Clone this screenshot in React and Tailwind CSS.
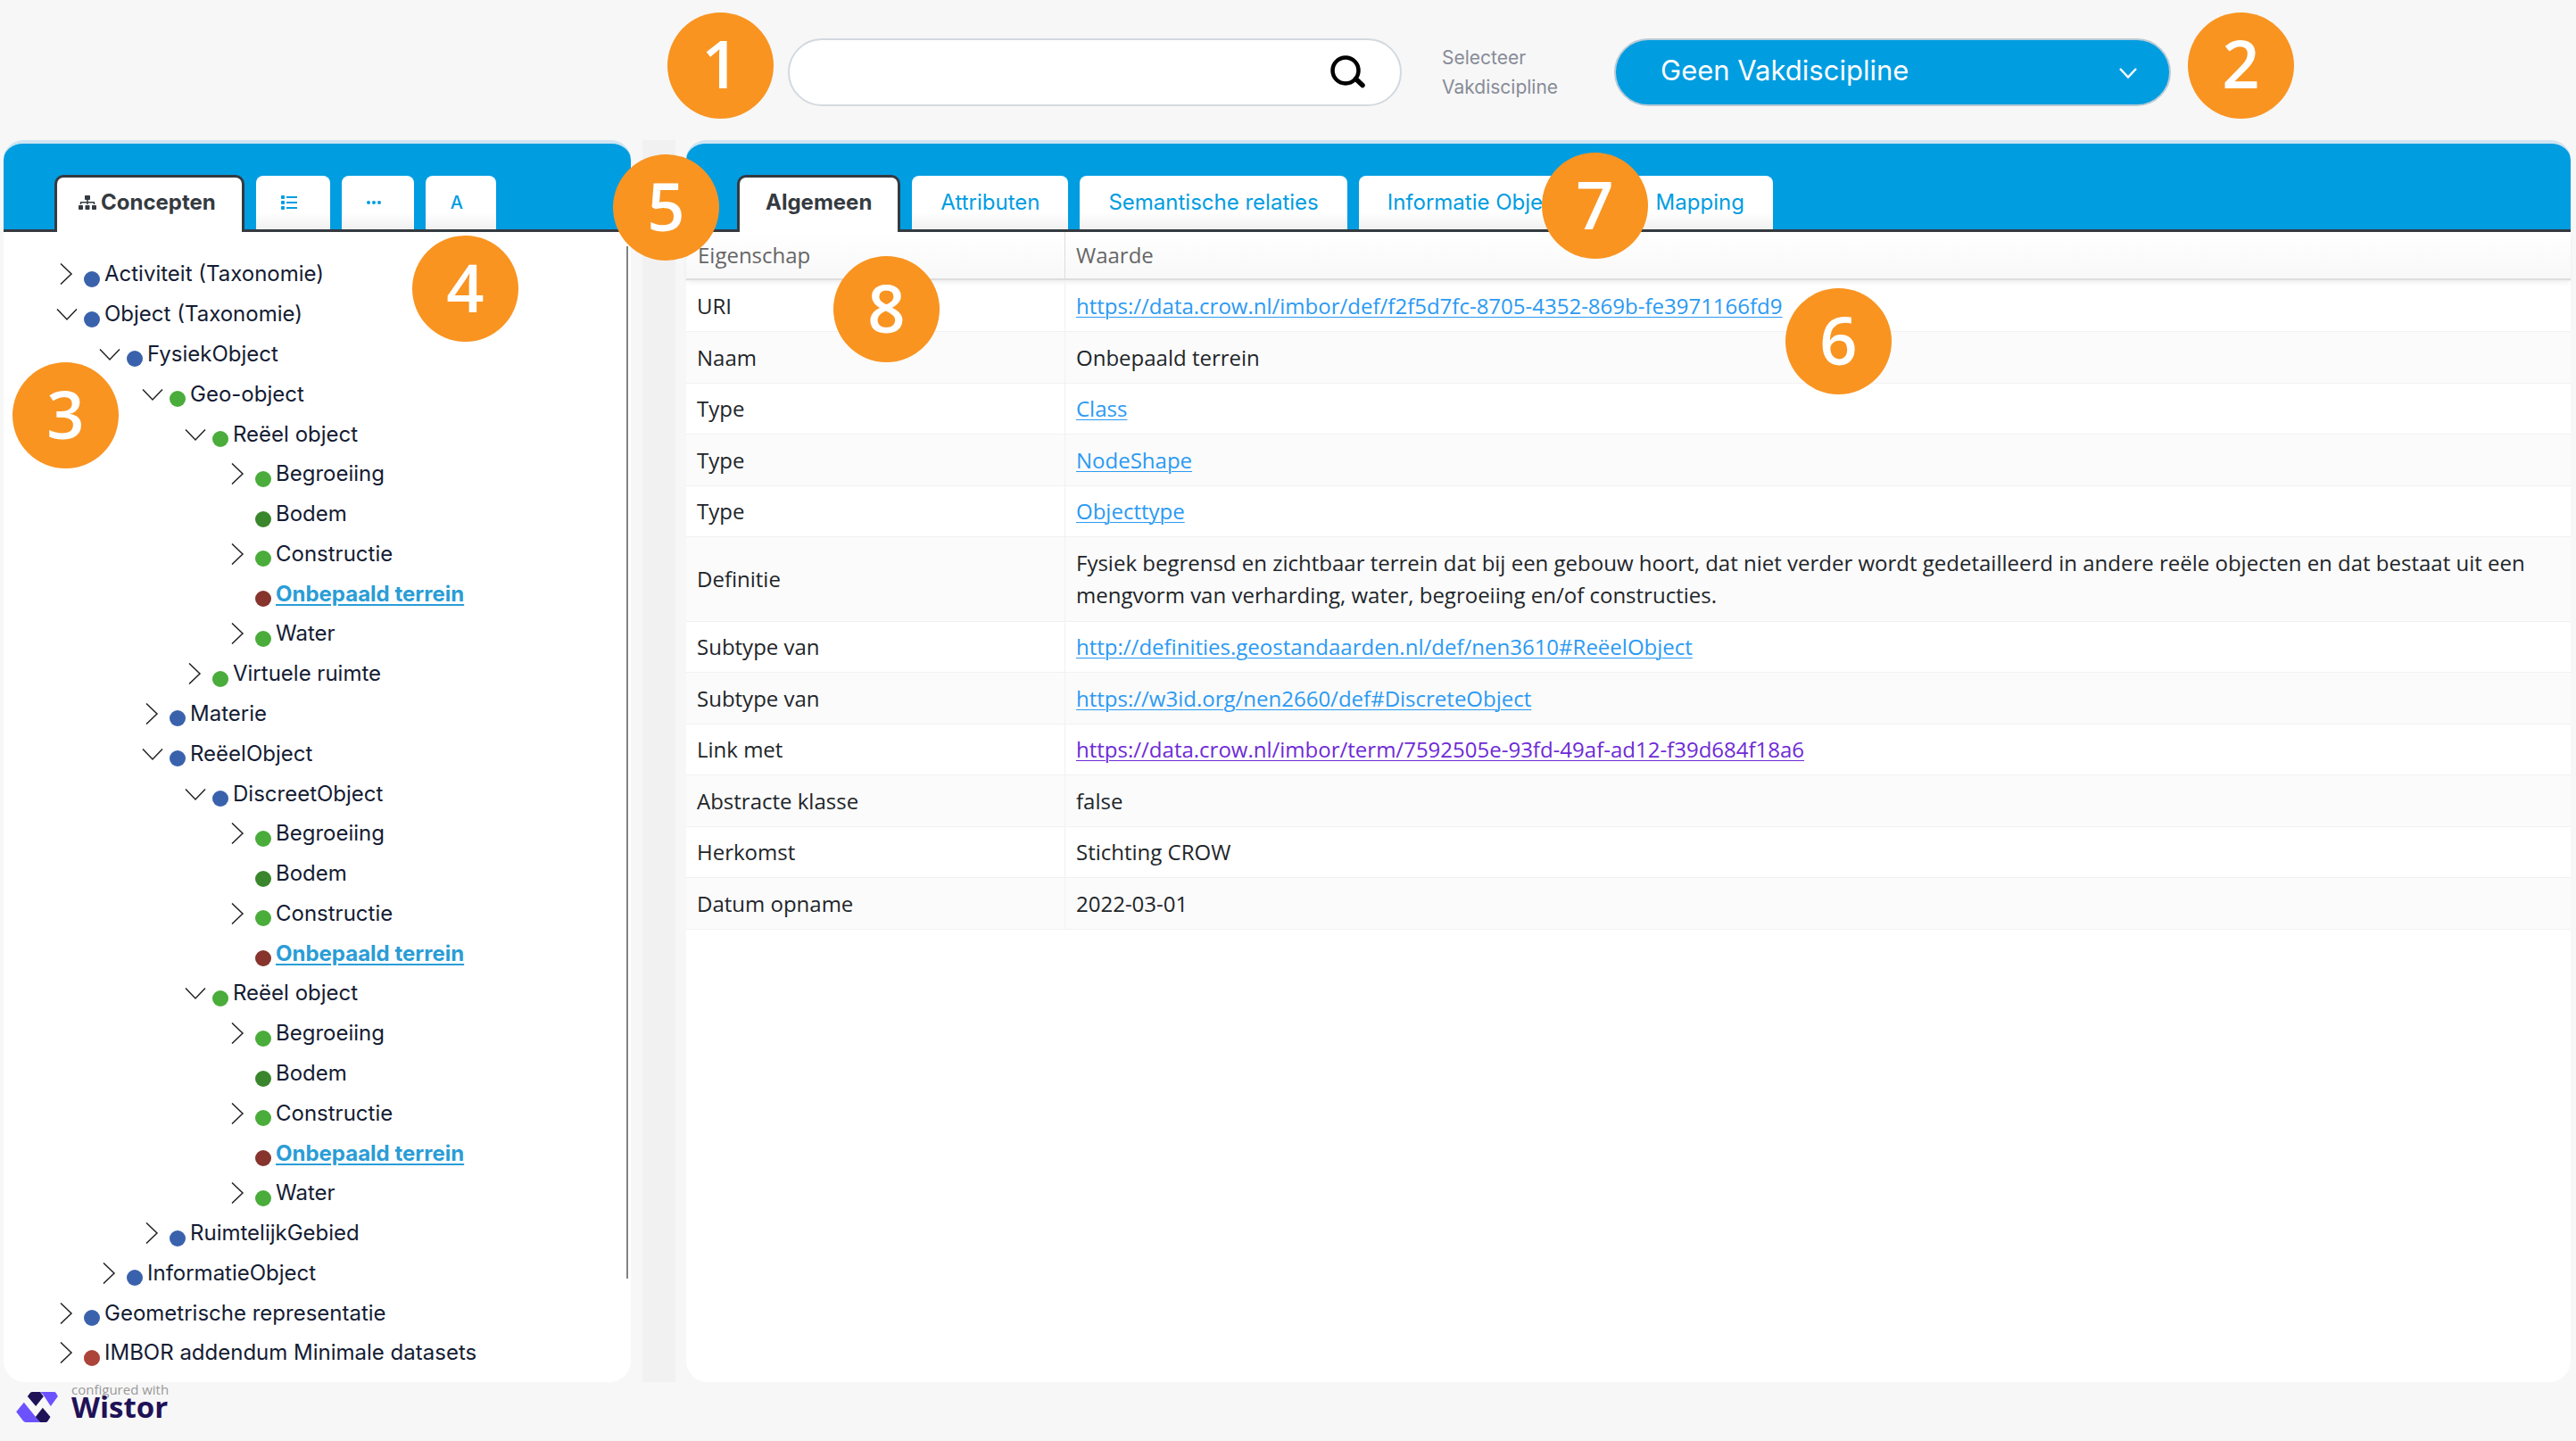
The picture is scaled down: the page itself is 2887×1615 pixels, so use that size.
import { FaSitemap } from "react-icons/fa";

const TREE = [
  [0, "closed", "blue", "Activiteit (Taxonomie)"],
  [0, "open", "blue", "Object (Taxonomie)"],
  [1, "open", "blue", "FysiekObject"],
  [2, "open", "green", "Geo-object"],
  [3, "open", "green", "Reëel object"],
  [4, "closed", "green", "Begroeiing"],
  [4, "leaf", "darkgreen", "Bodem"],
  [4, "closed", "green", "Constructie"],
  [4, "leaf", "darkred", "Onbepaald terrein"],
  [4, "closed", "green", "Water"],
  [3, "closed", "green", "Virtuele ruimte"],
  [2, "closed", "blue", "Materie"],
  [2, "open", "blue", "ReëelObject"],
  [3, "open", "blue", "DiscreetObject"],
  [4, "closed", "green", "Begroeiing"],
  [4, "leaf", "darkgreen", "Bodem"],
  [4, "closed", "green", "Constructie"],
  [4, "leaf", "darkred", "Onbepaald terrein"],
  [3, "open", "green", "Reëel object"],
  [4, "closed", "green", "Begroeiing"],
  [4, "leaf", "darkgreen", "Bodem"],
  [4, "closed", "green", "Constructie"],
  [4, "leaf", "darkred", "Onbepaald terrein"],
  [4, "closed", "green", "Water"],
  [2, "closed", "blue", "RuimtelijkGebied"],
  [1, "closed", "blue", "InformatieObject"],
  [0, "closed", "blue", "Geometrische representatie"],
  [0, "closed", "red", "IMBOR addendum Minimale datasets"],
];

const INDENT = ["pl-0", "pl-[48px]", "pl-[96px]", "pl-[144px]", "pl-[192px]"];

const DOT = {
  blue: "bg-[#3a62ac]",
  green: "bg-[#4aac3a]",
  darkgreen: "bg-[#3a862c]",
  red: "bg-[#ac443a]",
  darkred: "bg-[#86342c]",
};

const PROPERTIES = [
  ["URI", "https://data.crow.nl/imbor/def/f2f5d7fc-8705-4352-869b-fe3971166fd9", "link"],
  ["Naam", "Onbepaald terrein"],
  ["Type", "Class", "link"],
  ["Type", "NodeShape", "link"],
  ["Type", "Objecttype", "link"],
  [
    "Definitie",
    "Fysiek begrensd en zichtbaar terrein dat bij een gebouw hoort, dat niet verder wordt gedetailleerd in andere reële objecten en dat bestaat uit een mengvorm van verharding, water, begroeiing en/of constructies.",
  ],
  ["Subtype van", "http://definities.geostandaarden.nl/def/nen3610#ReëelObject", "link"],
  ["Subtype van", "https://w3id.org/nen2660/def#DiscreteObject", "link"],
  ["Link met", "https://data.crow.nl/imbor/term/7592505e-93fd-49af-ad12-f39d684f18a6", "visited"],
  ["Abstracte klasse", "false"],
  ["Herkomst", "Stichting CROW"],
  ["Datum opname", "2022-03-01"],
];

function Badge({ n, place }) {
  return (
    <div
      className={`absolute z-10 flex size-[119px] items-center justify-center rounded-full bg-[#f99421] pb-1 font-['Open_Sans',sans-serif] text-[74px] leading-none font-semibold text-white ${place}`}
    >
      {n}
    </div>
  );
}

function TabBar({ label, children }) {
  return (
    <div
      role="tablist"
      aria-label={label}
      className="flex h-[103px] items-end gap-[13px] rounded-t-[22px] border-t-4 border-b-3 border-t-[#cfe4f2] border-b-[#343a40] bg-[#009de1] pl-[57px]"
    >
      {children}
    </div>
  );
}

function Tab({ active, pad = "px-8", name, children }) {
  return (
    <button
      type="button"
      role="tab"
      aria-selected={!!active}
      aria-label={name}
      className={`flex shrink-0 items-center whitespace-nowrap text-[24px] leading-9 ${pad} ${
        active
          ? "-mb-[3px] h-[64px] rounded-t-[10px] border-x-3 border-t-3 border-[#343a40] bg-white pb-[6px] font-bold text-[#343a40]"
          : "h-[60px] rounded-t-[8px] bg-linear-to-b from-white from-70% to-[#f0f0f0] text-[#009de1]"
      }`}
    >
      {children}
    </button>
  );
}

function ListIcon() {
  return (
    <svg width="18" height="18" viewBox="0 0 18 18" fill="currentColor" aria-hidden="true">
      <rect x="0" y="1" width="4" height="4" rx="1" />
      <rect x="0" y="7" width="4" height="4" rx="1" />
      <rect x="0" y="13" width="4" height="4" rx="1" />
      <rect x="6" y="2" width="12" height="2" />
      <rect x="6" y="8" width="12" height="2" />
      <rect x="6" y="14" width="12" height="2" />
    </svg>
  );
}

function DotsIcon() {
  return (
    <svg width="16" height="6" viewBox="0 0 16 6" fill="currentColor" aria-hidden="true">
      <circle cx="2" cy="3" r="2" />
      <circle cx="8" cy="3" r="2" />
      <circle cx="14" cy="3" r="2" />
    </svg>
  );
}

function TreeRow({ level, state, color, text }) {
  const selected = color === "darkred";
  return (
    <li
      role="treeitem"
      aria-level={level + 1}
      aria-selected={selected}
      className={`flex flex-1 items-center ${INDENT[level]}`}
    >
      {state === "leaf" ? (
        <span className="w-[24px]" />
      ) : (
        <button type="button" aria-label={state === "open" ? "Inklappen" : "Uitklappen"} className="w-[24px]">
          <svg width="24" height="24" viewBox="0 0 24 24" fill="none" stroke="#222" strokeWidth="1.5" aria-hidden="true">
            <path d={state === "open" ? "M1 6.5 12 18 23 6.5" : "M5 .5 17 12 5 23.5"} />
          </svg>
        </button>
      )}
      <span className={`mt-[11px] ml-[7px] size-[18px] rounded-full ${DOT[color]}`} />
      {selected ? (
        <a href="#onbepaald-terrein" className="ml-[5px] font-bold text-[#2a9dd6] underline decoration-2 underline-offset-[3px]">
          {text}
        </a>
      ) : (
        <span className="ml-[5px]">{text}</span>
      )}
    </li>
  );
}

export default function App() {
  return (
    <div className="flex min-h-screen flex-col bg-[#f7f7f7] font-['Inter',sans-serif]">
      <header className="flex h-[157px] items-center pt-1 pl-[883px]">
        <form className="relative flex h-[76px] w-[688px] items-center rounded-full border-2 border-[#d3d9df] bg-white pr-[37px] pl-8">
          <Badge n="1" place="-top-[31px] -left-[137px]" />
          <input type="search" aria-label="Zoeken" className="h-full min-w-0 flex-1 text-[28px] outline-none" />
          <button type="button" aria-label="Zoek">
            <svg width="42" height="42" viewBox="0 0 42 42" fill="none" stroke="#000" aria-hidden="true">
              <circle cx="18" cy="19" r="14.5" strokeWidth="4.5" />
              <path d="m29.5 28.5 7.5 7" strokeWidth="5.5" strokeLinecap="round" />
            </svg>
          </button>
        </form>
        <label htmlFor="discipline" className="ml-[45px] w-[193px] text-[21px] leading-[33px] text-[#878c97]">
          Selecteer
          <br />
          Vakdiscipline
        </label>
        <div className="relative w-[624px]">
          <select
            id="discipline"
            className="h-[76px] w-full appearance-none rounded-full border-2 border-[#b9cbd6] bg-[#009de1] pb-[2px] pl-[50px] text-[31px] text-white"
          >
            <option>Geen Vakdiscipline</option>
          </select>
          <svg className="pointer-events-none absolute top-[32px] right-[38px]" width="20" height="14" viewBox="0 0 20 14" fill="none" stroke="#fff" strokeWidth="2.5" aria-hidden="true">
            <path d="m1 2 9 9.500L19 2" />
          </svg>
          <Badge n="2" place="-top-[29px] left-[643px]" />
        </div>
      </header>

      <main className="relative flex flex-1 pr-[6px] pl-1">
        <section className="flex w-[703px] shrink-0 flex-col rounded-[24px] bg-white">
          <TabBar label="Navigatie">
            <Tab active pad="pl-6 pr-[29px]">
              <FaSitemap className="mr-[5px] size-5" aria-hidden="true" />
              Concepten
            </Tab>
            <Tab pad="pl-[28px] pr-[37px]" name="Lijst">
              <ListIcon />
            </Tab>
            <Tab pad="pl-[28px] pr-[37px]" name="Meer">
              <DotsIcon />
            </Tab>
            <Tab pad="pl-[28px] pr-[37px]">
              <span className="text-[20px] font-medium">A</span>
            </Tab>
          </TabBar>
          <div className="flex flex-1 pr-[3px]">
            <ul role="tree" aria-label="Concepten" className="flex flex-1 flex-col pt-[25px] pb-[10px] pl-[59px] text-[24px] leading-9 text-[#141c33]">
              {TREE.map(([level, state, color, text], i) => (
                <TreeRow key={i} level={level} state={state} color={color} text={text} />
              ))}
            </ul>
            <div className="mt-4 mb-[116px] w-[2px] bg-[#808285]" />
          </div>
        </section>

        <div role="separator" aria-orientation="vertical" className="mr-3 ml-[13px] w-[37px] shrink-0 bg-[#f1f1f1]" />

        <section className="min-w-0 flex-1 rounded-[24px] bg-white">
          <TabBar label="Details">
            <Tab active pad="px-[29px]">Algemeen</Tab>
            <Tab>Attributen</Tab>
            <Tab>Semantische relaties</Tab>
            <Tab>Informatie Objecten</Tab>
            <Tab>Mapping</Tab>
          </TabBar>
          <table className="w-full table-fixed border-separate border-spacing-0 text-left font-['Open_Sans',sans-serif] text-[24px] leading-9 text-[#212529]">
            <thead>
              <tr className="h-[54px] bg-linear-to-b from-white to-[#f8f8f8] text-[#666] shadow-md shadow-black/5">
                <th scope="col" className="w-[425px] border-r border-b-2 border-[#ddd] pl-[13px] font-normal">Eigenschap</th>
                <th scope="col" className="border-b-2 border-[#ddd] pl-3 font-normal">Waarde</th>
              </tr>
            </thead>
            <tbody>
              {PROPERTIES.map(([label, value, kind], i) => (
                <tr key={i} className="h-[57px] even:h-[58px] even:bg-[#fbfbfb]">
                  <td className="border-t border-r border-[#f1f1f1] py-[10px] pl-3">{label}</td>
                  <td className={`border-t border-[#f1f1f1] pr-3 pl-3 ${label === "Definitie" ? "py-[11px]" : ""}`}>
                    {kind ? (
                      <a
                        href={`#${label}-${i}`}
                        className={`underline decoration-1 underline-offset-[3px] ${kind === "visited" ? "text-[#6e2ad6]" : "text-[#2b9af3]"}`}
                      >
                        {value}
                      </a>
                    ) : (
                      value
                    )}
                  </td>
                </tr>
              ))}
            </tbody>
            <tfoot>
              <tr>
                <td colSpan={2} className="border-t border-[#f1f1f1] p-0" />
              </tr>
            </tfoot>
          </table>
        </section>

        <Badge n="3" place="top-[249px] left-[14px]" />
        <Badge n="4" place="top-[107px] left-[462px]" />
        <Badge n="5" place="top-[16px] left-[687px]" />
        <Badge n="6" place="top-[166px] left-[2001px]" />
        <Badge n="7" place="top-[14px] left-[1728px]" />
        <Badge n="8" place="top-[130px] left-[934px]" />
      </main>

      <footer className="flex h-[66px] items-start gap-[15px] pl-[18px]">
        <svg className="mt-[11px]" width="47" height="34" viewBox="0 0 140 102" aria-hidden="true">
          <path fill="#6c52ff" d="M80 0h48q5 0 7 5l5 10-24 33L90 8zM26 35 66 85l14 17H32q-5 0-9-5L0 67z" />
          <path fill="#1f1257" d="M54 0h26l12 15-26 33L38 15l9-12q3-3 7-3zM89 53l26 31-9 14q-3 4-7 4H80L65 84z" />
        </svg>
        <a href="#wistor" className="flex flex-col">
          <span className="font-['Open_Sans',sans-serif] text-[15px] leading-4 text-[#999]">configured with</span>
          <span className="font-['Open_Sans',sans-serif] text-[33px] leading-6 font-bold text-[#1f1257]">Wistor</span>
        </a>
      </footer>
    </div>
  );
}
